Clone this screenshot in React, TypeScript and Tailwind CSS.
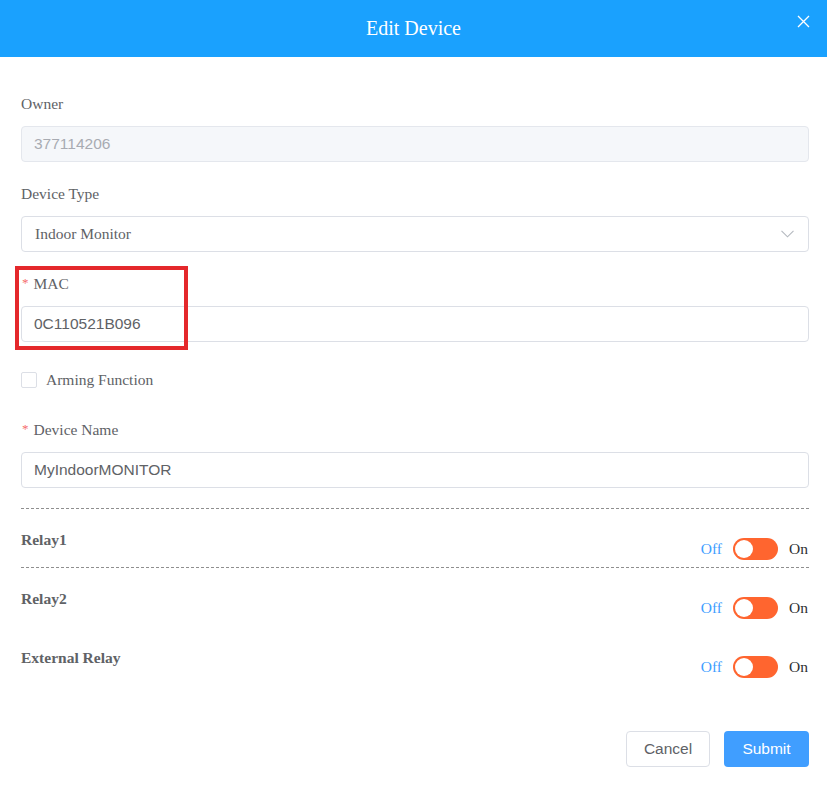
import React from "react";

const serif = "font-['Liberation_Serif','Times_New_Roman',serif]";
const sans = "font-['Liberation_Sans',Arial,sans-serif]";

function Label({ text, required }: { text: string; required?: boolean }) {
  return (
    <div className={`h-[44px] flex items-center text-[15.5px] text-[#606266] ${serif}`}>
      {required && <span className="text-[#f56c6c] text-[13px] ml-[1px] mr-[5px] mt-[-2px]">*</span>}
      {text}
    </div>
  );
}

function Toggle() {
  return (
    <div className={`flex items-center h-[22px] text-[15.5px] ${serif}`}>
      <span className="text-[#409eff]">Off</span>
      <div className="relative ml-[11px] mr-[11px] w-[45px] h-[22px] rounded-full bg-[#ff652f]">
        <div className="absolute left-[2px] top-[2px] w-[18px] h-[18px] rounded-full bg-white" />
      </div>
      <span className="text-[#303133]">On</span>
    </div>
  );
}

function RelayRow({ name, border }: { name: string; border: boolean }) {
  return (
    <div
      className={`h-[59px] flex justify-between border-t border-dashed ${
        border ? "border-[#8f8f8f]" : "border-transparent"
      }`}
    >
      <div className={`pt-[21px] leading-[20px] text-[15.5px] font-bold text-[#606266] ${serif}`}>{name}</div>
      <div className="pt-[29px] mr-[1px]">
        <Toggle />
      </div>
    </div>
  );
}

export default function App() {
  return (
    <div className="relative w-[827px] h-[787px] bg-white overflow-hidden">
      <div className="relative h-[57px] bg-[#1aa1fe] flex items-center justify-center pb-[2px]">
        <span className={`text-white text-[20px] ${serif}`}>Edit Device</span>
        <svg className="absolute left-[797px] top-[15px]" width="13" height="13" viewBox="0 0 13 13">
          <path d="M1 1L12 12M12 1L1 12" stroke="white" strokeWidth="1.3" fill="none" />
        </svg>
      </div>

      <div className="pl-[21px] pr-[18px] pt-[25px]">
        {/* Owner */}
        <div className="mb-[10px]">
          <Label text="Owner" />
          <div
            className={`h-[36px] flex items-center px-[12px] rounded-[4px] border border-[#e4e7ed] bg-[#f5f7fa] text-[15.5px] text-[#a8abb2] ${sans}`}
          >
            377114206
          </div>
        </div>

        {/* Device Type */}
        <div className="mb-[10px]">
          <Label text="Device Type" />
          <div
            className={`h-[36px] flex items-center justify-between pl-[13px] pr-[14px] rounded-[4px] border border-[#dcdfe6] bg-white text-[15.5px] text-[#606266] ${serif}`}
          >
            <span>Indoor Monitor</span>
            <svg width="13" height="8" viewBox="0 0 13 8">
              <path d="M0.5 0.8L6.5 6.8L12.5 0.8" stroke="#b4b8bf" strokeWidth="1.1" fill="none" />
            </svg>
          </div>
        </div>

        {/* MAC */}
        <div className="mb-[10px]">
          <Label text="MAC" required />
          <div
            className={`h-[36px] flex items-center px-[12px] rounded-[4px] border border-[#dcdfe6] bg-white text-[15.5px] text-[#606266] ${sans}`}
          >
            0C110521B096
          </div>
        </div>

        {/* Arming */}
        <div className="h-[56px] flex items-center">
          <div className="w-[16px] h-[16px] rounded-[2px] border border-[#dcdfe6] bg-white" />
          <span className={`ml-[9px] text-[15.5px] text-[#606266] ${serif}`}>Arming Function</span>
        </div>

        {/* Device Name */}
        <div>
          <Label text="Device Name" required />
          <div
            className={`h-[36px] flex items-center px-[12px] rounded-[4px] border border-[#dcdfe6] bg-white text-[15.5px] text-[#606266] ${sans}`}
          >
            MyIndoorMONITOR
          </div>
        </div>

        <div className="mt-[20px]">
          <RelayRow name="Relay1" border />
          <RelayRow name="Relay2" border />
          <RelayRow name="External Relay" border={false} />
        </div>

        <div className="mt-[46px] flex justify-end gap-[14px]">
          <button
            className={`w-[84px] h-[36px] rounded-[4px] border border-[#dcdfe6] bg-white text-[15.5px] text-[#606266] ${sans}`}
          >
            Cancel
          </button>
          <button className={`w-[85px] h-[36px] rounded-[4px] bg-[#409eff] text-[15.5px] text-white ${sans}`}>
            Submit
          </button>
        </div>
      </div>

      {/* annotation overlay */}
      <div className="absolute left-[15px] top-[266px] w-[173px] h-[84px] border-[4px] border-[#e4282b] pointer-events-none" />
    </div>
  );
}
